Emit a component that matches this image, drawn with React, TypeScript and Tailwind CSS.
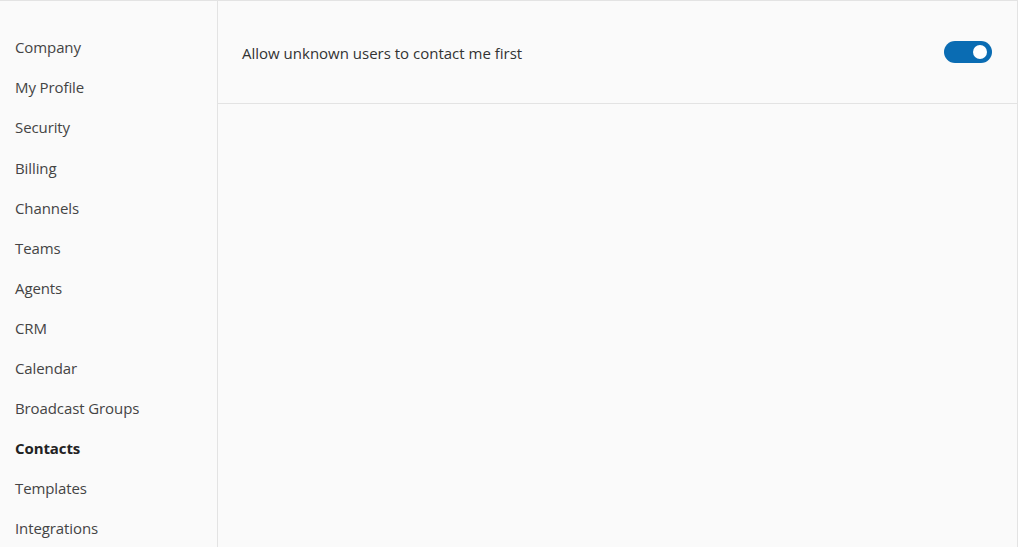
import React from "react";

const items = [
  "Company",
  "My Profile",
  "Security",
  "Billing",
  "Channels",
  "Teams",
  "Agents",
  "CRM",
  "Calendar",
  "Broadcast Groups",
  "Contacts",
  "Templates",
  "Integrations",
];

export default function App() {
  return (
    <div
      className="w-[1020px] h-[547px] overflow-hidden bg-white text-[#333333]"
      style={{ fontFamily: '"Open Sans", "Noto Sans", sans-serif' }}
    >
      <div className="flex h-full border-t border-[#e3e3e3] w-[1018px] bg-[#fafafa]">
        <nav className="w-[218px] shrink-0 border-r border-[#e3e3e3] pt-[26.5px]">
          {items.map((it) => (
            <div
              key={it}
              className={`h-[40.1px] flex items-center pl-[15px] text-[15px] tracking-[-0.1px] ${
                it === "Contacts" ? "font-bold text-[#222222]" : "text-[#444444]"
              }`}
            >
              {it}
            </div>
          ))}
        </nav>
        <main className="flex-1 border-r border-[#e3e3e3]">
          <div className="h-[103px] border-b border-[#e3e3e3] flex items-center justify-between pl-[24px] pr-[24px] pt-[3px]">
            <span className="text-[15px] text-[#333333]">
              Allow unknown users to contact me first
            </span>
            <div className="relative w-[48px] h-[22px] rounded-full bg-[#0a6cb3] mr-px -mt-[4px]">
              <div className="absolute right-[5px] top-[4px] w-[14px] h-[14px] rounded-full bg-white" />
            </div>
          </div>
        </main>
      </div>
    </div>
  );
}
